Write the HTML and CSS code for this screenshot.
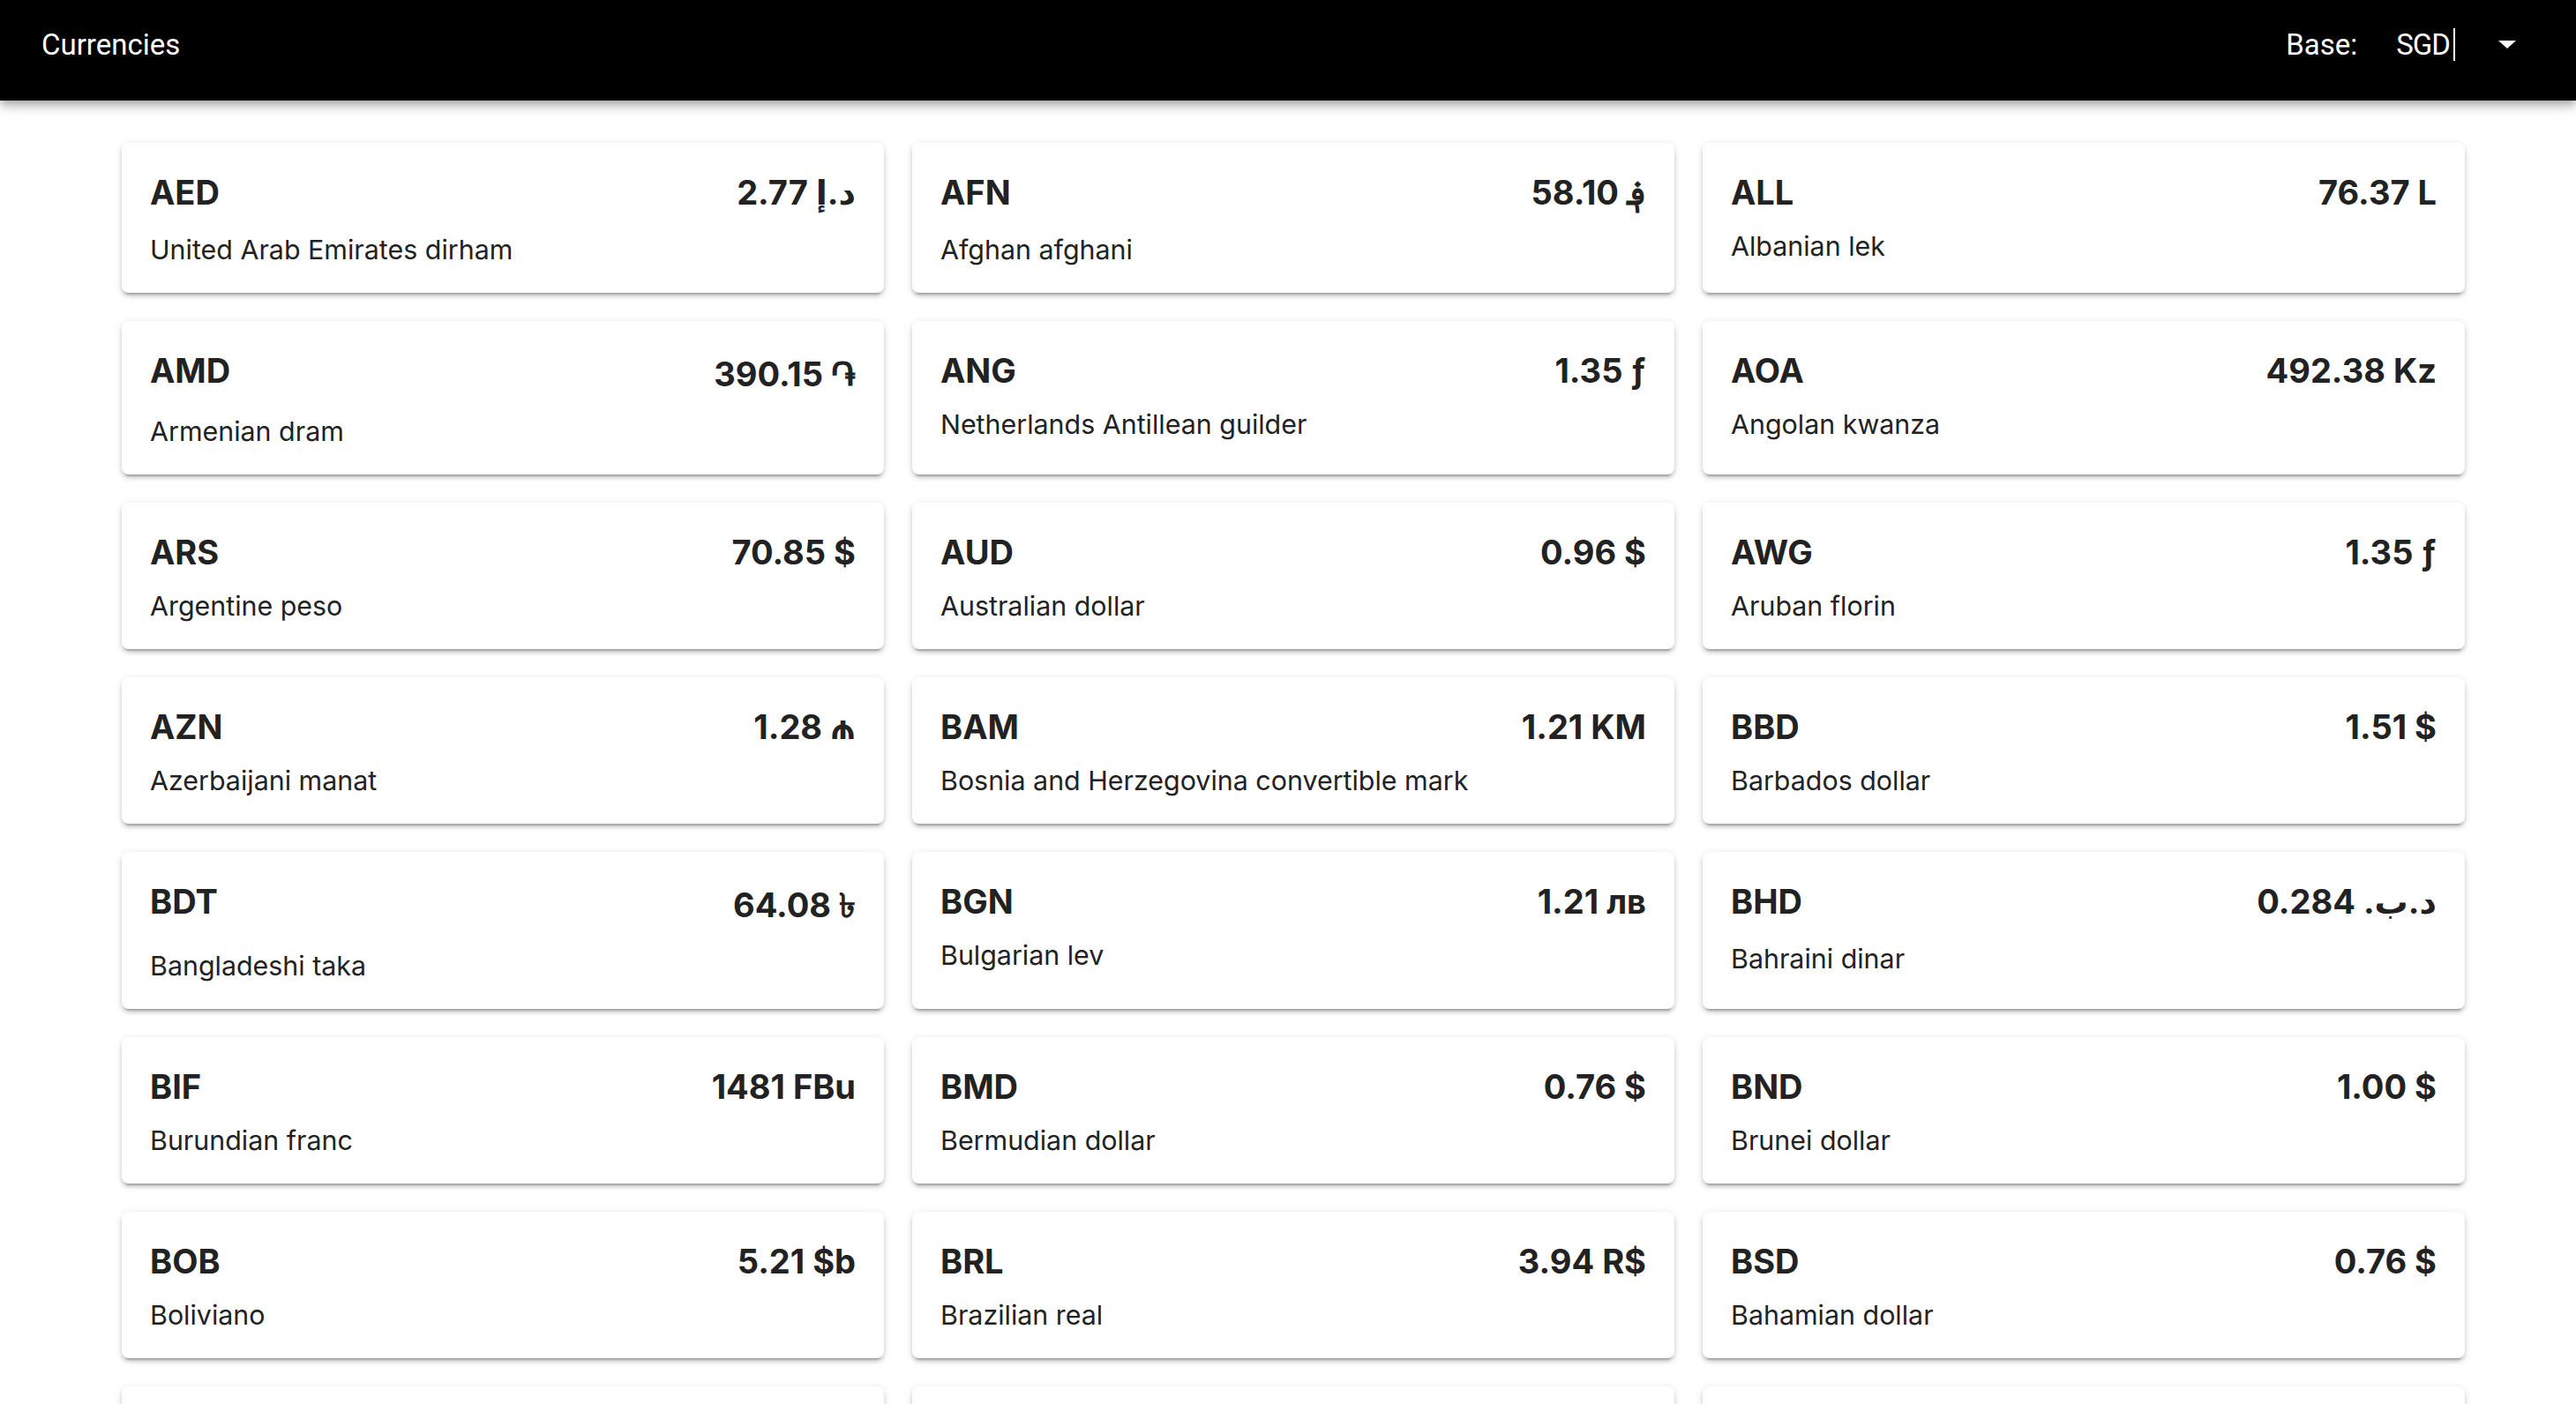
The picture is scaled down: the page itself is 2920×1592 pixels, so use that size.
FILE: index.html
```html
<!DOCTYPE html>
<html lang="en">
<head>
<meta charset="utf-8">
<title>Currencies</title>
<link rel="stylesheet" href="styles.css">
</head>
<body>
<header class="toolbar">
  <div class="title">Currencies</div>
  <div class="base">
    <span class="base-label">Base:</span>
    <span class="base-value">SGD</span>
    <span class="caret"></span>
    <span class="arrow"></span>
  </div>
</header>
<main class="grid">
  <section class="card"><div class="head"><span class="code">AED</span><span class="value sym-4">2.77 د.إ</span></div><div class="name">United Arab Emirates dirham</div></section>
  <section class="card"><div class="head"><span class="code">AFN</span><span class="value sym-4">58.10 ؋</span></div><div class="name">Afghan afghani</div></section>
  <section class="card"><div class="head"><span class="code">ALL</span><span class="value">76.37 L</span></div><div class="name">Albanian lek</div></section>

  <section class="card"><div class="head"><span class="code">AMD</span><span class="value sym-8">390.15 ֏</span></div><div class="name">Armenian dram</div></section>
  <section class="card"><div class="head"><span class="code">ANG</span><span class="value">1.35 ƒ</span></div><div class="name">Netherlands Antillean guilder</div></section>
  <section class="card"><div class="head"><span class="code">AOA</span><span class="value">492.38 Kz</span></div><div class="name">Angolan kwanza</div></section>

  <section class="card"><div class="head"><span class="code">ARS</span><span class="value">70.85 $</span></div><div class="name">Argentine peso</div></section>
  <section class="card"><div class="head"><span class="code">AUD</span><span class="value">0.96 $</span></div><div class="name">Australian dollar</div></section>
  <section class="card"><div class="head"><span class="code">AWG</span><span class="value">1.35 ƒ</span></div><div class="name">Aruban florin</div></section>

  <section class="card"><div class="head"><span class="code">AZN</span><span class="value">1.28 ₼</span></div><div class="name">Azerbaijani manat</div></section>
  <section class="card"><div class="head"><span class="code">BAM</span><span class="value">1.21 KM</span></div><div class="name">Bosnia and Herzegovina convertible mark</div></section>
  <section class="card"><div class="head"><span class="code">BBD</span><span class="value">1.51 $</span></div><div class="name">Barbados dollar</div></section>

  <section class="card"><div class="head"><span class="code">BDT</span><span class="value sym-12">64.08 ৳</span></div><div class="name">Bangladeshi taka</div></section>
  <section class="card"><div class="head"><span class="code">BGN</span><span class="value">1.21 лв</span></div><div class="name">Bulgarian lev</div></section>
  <section class="card"><div class="head"><span class="code">BHD</span><span class="value sym-4">0.284 .د.ب</span></div><div class="name">Bahraini dinar</div></section>

  <section class="card"><div class="head"><span class="code">BIF</span><span class="value">1481 FBu</span></div><div class="name">Burundian franc</div></section>
  <section class="card"><div class="head"><span class="code">BMD</span><span class="value">0.76 $</span></div><div class="name">Bermudian dollar</div></section>
  <section class="card"><div class="head"><span class="code">BND</span><span class="value">1.00 $</span></div><div class="name">Brunei dollar</div></section>

  <section class="card"><div class="head"><span class="code">BOB</span><span class="value">5.21 $b</span></div><div class="name">Boliviano</div></section>
  <section class="card"><div class="head"><span class="code">BRL</span><span class="value">3.94 R$</span></div><div class="name">Brazilian real</div></section>
  <section class="card"><div class="head"><span class="code">BSD</span><span class="value">0.76 $</span></div><div class="name">Bahamian dollar</div></section>

  <section class="card"><div class="head"><span class="code">BTN</span><span class="value">54.13 Nu.</span></div><div class="name">Bhutanese ngultrum</div></section>
  <section class="card"><div class="head"><span class="code">BWP</span><span class="value">8.12 P</span></div><div class="name">Botswana pula</div></section>
  <section class="card"><div class="head"><span class="code">BYN</span><span class="value">1.61 Br</span></div><div class="name">Belarusian ruble</div></section>
</main>
</body>
</html>
```

FILE: styles.css
```css
html {
  scrollbar-width: none;
}

body {
  margin: 0;
  background: #ffffff;
  font-family: Inter, "DejaVu Sans", "Noto Sans", sans-serif;
  color: #222222;
}

.toolbar {
  position: relative;
  z-index: 2;
  box-sizing: border-box;
  height: 114px;
  padding: 0 68px 13px 47px;
  background: #000000;
  color: #ffffff;
  display: flex;
  align-items: center;
  justify-content: space-between;
  font-family: Roboto, "Liberation Sans", sans-serif;
  font-size: 33px;
  line-height: 40px;
  box-shadow: 0 4px 8px -2px rgba(0, 0, 0, 0.2),
              0 8px 10px 0 rgba(0, 0, 0, 0.14),
              0 2px 20px 0 rgba(0, 0, 0, 0.12);
}

.base {
  display: flex;
  align-items: center;
}

.base-label {
  margin-right: 44px;
}

.base-value {
  letter-spacing: -1px;
}

.caret {
  width: 2px;
  height: 37px;
  margin-left: 4px;
  background: #ffffff;
}

.arrow {
  width: 0;
  height: 0;
  margin-left: 49px;
  border-left: 10px solid transparent;
  border-right: 10px solid transparent;
  border-top: 9px solid #ffffff;
}

.grid {
  display: grid;
  grid-template-columns: repeat(3, 864px);
  column-gap: 32px;
  row-gap: 32px;
  padding: 48px 0 40px 138px;
}

.card {
  box-sizing: border-box;
  background: #ffffff;
  border-radius: 8px;
  padding: 32px 32px 29px;
  box-shadow: 0 6px 2px -4px rgba(0, 0, 0, 0.2),
              0 4px 4px 0 rgba(0, 0, 0, 0.14),
              0 2px 10px 0 rgba(0, 0, 0, 0.12);
}

.head {
  display: flex;
  justify-content: space-between;
  align-items: flex-start;
}

.code,
.value {
  font-size: 38px;
  font-weight: 700;
  line-height: 48px;
  height: 48px;
  white-space: nowrap;
}

.value.sym-4 {
  padding-bottom: 4px;
}

.value.sym-8 {
  padding-top: 4px;
  padding-bottom: 4px;
}

.value.sym-12 {
  padding-top: 4px;
  padding-bottom: 8px;
}

.name {
  margin-top: 17px;
  font-size: 30.4px;
  line-height: 40px;
  height: 40px;
  white-space: nowrap;
}
```
